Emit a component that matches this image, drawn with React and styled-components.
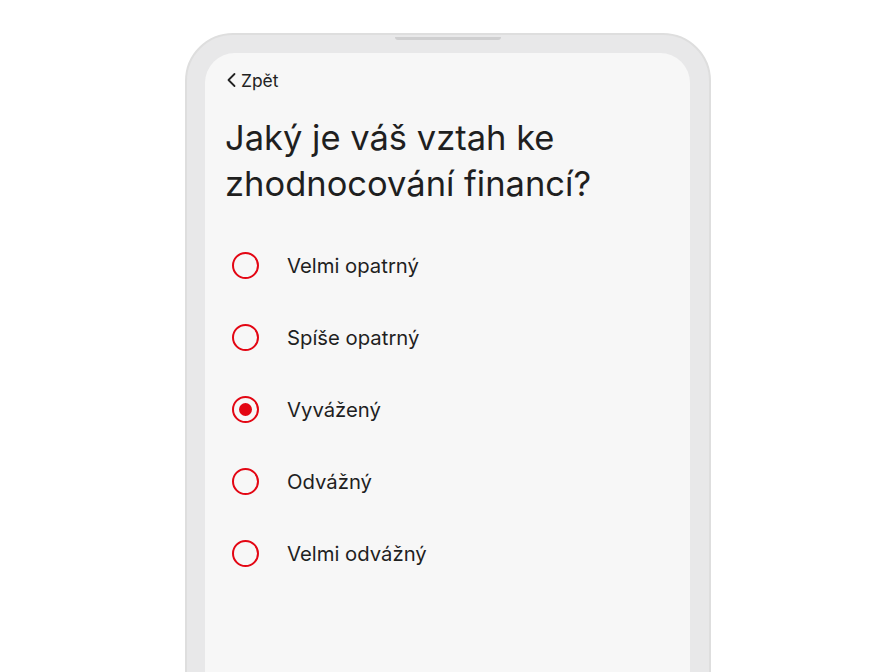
import React, { useState } from "react";
import styled, { createGlobalStyle } from "styled-components";

const Global = createGlobalStyle`
  html, body { margin: 0; padding: 0; background: #ffffff; }
  body { font-family: Inter, "Noto Sans", sans-serif; overflow: hidden; }
  * { box-sizing: border-box; }
`;

const Page = styled.div`
  width: 896px;
  height: 672px;
  display: flex;
  justify-content: center;
  padding-top: 33px;
  overflow: hidden;
`;

const Phone = styled.div`
  position: relative;
  width: 526px;
  height: 700px;
  border: 2px solid #dedede;
  border-radius: 48px;
  background: #e8e8e9;
  padding: 18px 19px 0 18px;
  display: flex;
`;

const Notch = styled.div`
  position: absolute;
  top: 2px;
  left: 208px;
  width: 106px;
  height: 3px;
  border-radius: 0 0 3px 3px;
  background: #cfcfd0;
`;

const Screen = styled.div`
  flex: 1;
  background: #f7f7f7;
  border-radius: 30px 30px 0 0;
  padding: 16px 21px 0 20px;
  display: flex;
  flex-direction: column;
`;

const Back = styled.button`
  display: flex;
  align-items: center;
  gap: 3px;
  border: none;
  background: none;
  padding: 0 0 0 1px;
  font-family: inherit;
  font-size: 17.4px;
  color: #222;
  cursor: pointer;
  align-self: flex-start;
  height: 22px;
`;

const Title = styled.h1`
  margin: 24px 0 0 0;
  font-size: 34.5px;
  line-height: 46px;
  font-weight: 400;
  color: #1f1f1f;
`;

const Options = styled.div`
  margin-top: 22px;
  display: flex;
  flex-direction: column;
`;

const Option = styled.label`
  display: flex;
  align-items: center;
  height: 72px;
  padding-left: 7px;
  gap: 28px;
  cursor: pointer;
`;

const Radio = styled.span`
  width: 27px;
  height: 27px;
  border-radius: 50%;
  border: 2px solid #e30613;
  display: flex;
  align-items: center;
  justify-content: center;
  flex-shrink: 0;
  &::after {
    content: "";
    width: 13px;
    height: 13px;
    border-radius: 50%;
    background: #e30613;
    display: ${(p) => (p.$checked ? "block" : "none")};
  }
`;

const Label = styled.span`
  font-size: 20.3px;
  color: #1f1f1f;
`;

const options = ["Velmi opatrný", "Spíše opatrný", "Vyvážený", "Odvážný", "Velmi odvážný"];

export default function App() {
  const [sel, setSel] = useState(2);
  return (
    <>
      <Global />
      <Page>
        <Phone>
          <Notch />
          <Screen>
            <Back>
              <svg width="12" height="16" viewBox="0 0 12 16" fill="none">
                <path d="M8.5 2 L2.5 8 L8.5 14" stroke="#222" strokeWidth="1.8" strokeLinecap="round" strokeLinejoin="round" />
              </svg>
              Zpět
            </Back>
            <Title>
              Jaký je váš vztah ke
              <br />
              zhodnocování financí?
            </Title>
            <Options>
              {options.map((o, i) => (
                <Option key={o} onClick={() => setSel(i)}>
                  <Radio $checked={sel === i} />
                  <Label>{o}</Label>
                </Option>
              ))}
            </Options>
          </Screen>
        </Phone>
      </Page>
    </>
  );
}
